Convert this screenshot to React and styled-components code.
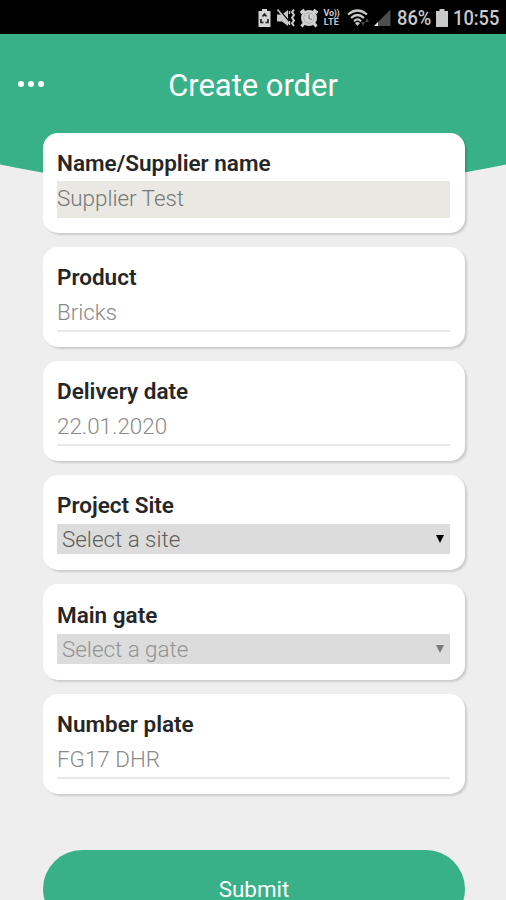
import React from "react";
import styled, { createGlobalStyle } from "styled-components";

const GlobalStyle = createGlobalStyle`
  * {
    box-sizing: border-box;
  }
  body {
    margin: 0;
    background: #eeeeee;
    font-family: Roboto, "Liberation Sans", sans-serif;
  }
`;

const Screen = styled.div`
  width: 506px;
  height: 900px;
  overflow: hidden;
  background: #eeeeee;
`;

const StatusBar = styled.div`
  display: flex;
  align-items: center;
  justify-content: flex-end;
  height: 34px;
  padding: 2px 6px 0 0;
  background: #000;
  color: #c9c9c9;
`;

const StatusIcon = styled.svg`
  display: block;
  flex: none;
  width: ${(p) => p.$w}px;
  height: 20px;
  margin-right: ${(p) => p.$gap || 0}px;
`;

const StatusText = styled.span`
  width: ${(p) => p.$w}px;
  margin-right: ${(p) => p.$gap || 0}px;
  font-size: 21px;
  font-weight: 500;
  line-height: 32px;
  white-space: nowrap;
  transform: scaleX(0.87);
  transform-origin: left;
`;

const Lte = styled.span`
  display: flex;
  flex-direction: column;
  align-items: center;
  width: 19px;
  margin-right: 6px;
  font-size: 9px;
  font-weight: 700;
  line-height: 9px;
  white-space: nowrap;
`;

const LteRow = styled.span`
  letter-spacing: ${(p) => p.$spacing || 0}px;
`;

const Header = styled.header`
  display: grid;
  grid-template-columns: 60px 1fr 60px;
  align-items: start;
  height: 157px;
  background: #38b188;
  clip-path: circle(1220px at 50% calc(100% - 1220px));
`;

const MenuButton = styled.button`
  display: flex;
  gap: 4px;
  margin: 47px 0 0 18px;
  padding: 0;
  border: 0;
  background: none;
`;

const Dot = styled.span`
  width: 6px;
  height: 6px;
  border-radius: 50%;
  background: #fff;
`;

const Title = styled.h1`
  margin: 32px 0 0;
  color: #fff;
  font-size: 30.9px;
  font-weight: 400;
  line-height: 40px;
  text-align: center;
`;

const Form = styled.form`
  display: flex;
  flex-direction: column;
  gap: 14px;
  width: 422px;
  margin: -58.5px 0 0 43px;
  position: relative;
`;

const Card = styled.div`
  height: ${(p) => (p.$short ? 95.5 : 100)}px;
  padding: 14.5px 15px 0 14px;
  border-radius: 15px;
  background: #fff;
  box-shadow: 2px 2px 2px rgba(0, 0, 0, 0.14);
`;

const Label = styled.label`
  display: block;
  height: 34px;
  color: #262626;
  font-size: 22.5px;
  font-weight: 600;
  line-height: 32px;
`;

const Field = styled.div`
  height: 37px;
  border-bottom: 2px solid ${(p) => (p.$filled ? "#e9e8e3" : "#e8e8e8")};
  background: ${(p) => (p.$filled ? "#e9e8e3" : "none")};
  color: ${(p) => (p.$filled ? "#777" : "#8a8a8a")};
  font-size: 22.4px;
  font-weight: 300;
  line-height: 34px;
`;

const Select = styled.div`
  display: flex;
  align-items: center;
  justify-content: space-between;
  height: 30px;
  margin-top: 1px;
  padding: 0 6px 0 5px;
  background: #dcdcdc;
  color: ${(p) => (p.$disabled ? "#939393" : "#5e5e5e")};
  font-size: 22.4px;
  font-weight: 300;
  line-height: 30px;
`;

const Arrow = styled.span`
  border: 4.5px solid transparent;
  border-top: 8px solid ${(p) => (p.$disabled ? "#7d7d7d" : "#000")};
  border-bottom: 0;
`;

const Submit = styled.button`
  height: 78px;
  margin-top: 42px;
  border: 0;
  border-radius: 39px;
  background: #38b188;
  color: #fff;
  font-family: inherit;
  font-size: 22.4px;
`;

const fields = [
  { label: "Name/Supplier name", value: "Supplier Test", filled: true },
  { label: "Product", value: "Bricks" },
  { label: "Delivery date", value: "22.01.2020" },
  { label: "Project Site", value: "Select a site", select: true },
  { label: "Main gate", value: "Select a gate", select: true, disabled: true },
  { label: "Number plate", value: "FG17 DHR" },
];

function Status() {
  return (
    <StatusBar>
      {/* battery saver */}
      <StatusIcon $w={13} $gap={5} viewBox="0 0 13 20">
        <path d="M4 1h5v2h3.500v16H.5V3H4z" fill="#d5d5d5" />
        <path d="M4.500 8.500l2-2.500 2 2.500M3 11v3.500h2.500M10 11v3.500H7.500" fill="none" stroke="#222" strokeWidth="1.7" />
      </StatusIcon>
      {/* vibrate / muted */}
      <StatusIcon $w={20} $gap={4} viewBox="0 0 20 20">
        <path d="M1 6.500h5l6-4.500v16l-6-4.500H1z" fill="#c9c9c9" />
        <path d="M3 1.500l11 13" stroke="#000" strokeWidth="1.4" />
        <path d="M1.500 1.500l12 14.500" stroke="#c9c9c9" strokeWidth="1.6" />
        <path d="M18 1.500l-2 2.700 2 2.800-2 2.800 2 2.800-2 2.700 2 2.700" fill="none" stroke="#c9c9c9" strokeWidth="2" />
        <path d="M13.500 3v3M13.500 13v4" stroke="#c9c9c9" strokeWidth="1.4" />
      </StatusIcon>
      {/* alarm */}
      <StatusIcon $w={18} $gap={4} viewBox="0 0 18 20">
        <circle cx="9" cy="10" r="8" fill="#d2d2d2" />
        <path d="M.5 5l4-3M17.500 5l-4-3M4 15.500l-2.500 3M14 15.500l2.500 3" stroke="#d2d2d2" strokeWidth="3" />
        <circle cx="9" cy="10" r="5.200" fill="none" stroke="#a5a5a5" strokeWidth=".8" />
        <path d="M9 6.500v4l3 1" fill="none" stroke="#777" strokeWidth="1.2" />
      </StatusIcon>
      <Lte>
        <LteRow $spacing={-0.3}>Vo))</LteRow>
        <LteRow $spacing={0.3}>LTE</LteRow>
      </Lte>
      {/* wifi */}
      <StatusIcon $w={23} $gap={3} viewBox="0 0 23 20">
        <g fill="none" stroke="#c9c9c9" strokeWidth="2.2">
          <path d="M1 6.500q9.500-8 19 0M4 10q6.500-6 13 0M7 13.200q3.500-3.500 7 0" />
        </g>
        <path d="M8 15q2.500-2 5 0l-2.500 3z" fill="#c9c9c9" />
        <path d="M14 14h4l-2 4zM18 14h4l-2-4z" fill="#484848" />
      </StatusIcon>
      {/* mobile signal */}
      <StatusIcon $w={18} $gap={6} viewBox="0 0 18 20">
        <path d="M17.500 1.500v16.500H1z" fill="#4d4d4d" />
        <path d="M5 14v4H1z" fill="#e5e5e5" />
      </StatusIcon>
      <StatusText $w={35} $gap={4}>86%</StatusText>
      <StatusIcon $w={12} $gap={5} viewBox="0 0 12 20">
        <path d="M3.500 1h5v2H12v16H0V3h3.500z" fill="#c9c9c9" />
      </StatusIcon>
      <StatusText $w={47}>10:55</StatusText>
    </StatusBar>
  );
}

function FormCard({ label, value, filled, select, disabled }) {
  return (
    <Card $short={select}>
      <Label>{label}</Label>
      {select ? (
        <Select $disabled={disabled}>
          {value}
          <Arrow $disabled={disabled} />
        </Select>
      ) : (
        <Field $filled={filled}>{value}</Field>
      )}
    </Card>
  );
}

function App() {
  return (
    <Screen>
      <GlobalStyle />
      <Status />
      <Header>
        <MenuButton aria-label="Menu">
          <Dot />
          <Dot />
          <Dot />
        </MenuButton>
        <Title>Create order</Title>
      </Header>
      <Form>
        {fields.map((field) => (
          <FormCard key={field.label} {...field} />
        ))}
        <Submit type="button">Submit</Submit>
      </Form>
    </Screen>
  );
}

export default App;
